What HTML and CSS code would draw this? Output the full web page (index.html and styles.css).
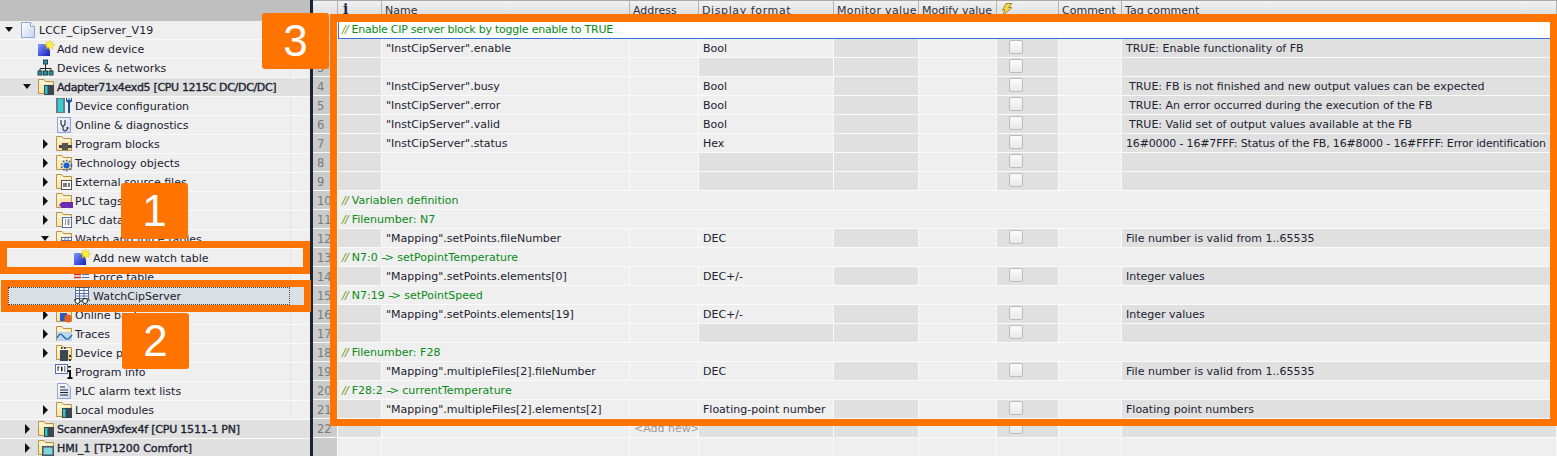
FILE: index.html
```html
<!DOCTYPE html>
<html lang="en">
<head>
<meta charset="utf-8">
<title>Watch table</title>
<link rel="stylesheet" href="styles.css">
</head>
<body>
<svg class="defs" width="0" height="0" aria-hidden="true">
  <defs>
    <linearGradient id="gBlue" x1="0" y1="0" x2="1" y2="1"><stop offset="0" stop-color="#7f96ff"/><stop offset="1" stop-color="#1420b8"/></linearGradient>
    <linearGradient id="gPage" x1="0" y1="0" x2="1" y2="1"><stop offset="0" stop-color="#ffffff"/><stop offset="1" stop-color="#c4d4f2"/></linearGradient>
    <linearGradient id="gFolder" x1="0" y1="0" x2="1" y2="1"><stop offset="0" stop-color="#fff6cf"/><stop offset="1" stop-color="#f5d583"/></linearGradient>
    <symbol id="folder" viewBox="0 0 18 18">
      <path d="M1.500 1.500h5.500l1.500 2h8v12h-15z" fill="url(#gFolder)" stroke="#b7954a"/>
      <path d="M2.500 5.500h13" stroke="#fff" fill="none"/>
    </symbol>
    <symbol id="star" viewBox="0 0 18 18">
      <path d="M12.500 0l1 3 2.600-1.800-1.100 3 3 .8-3 1 1.100 3-2.600-1.800-1 3-1-3-2.600 1.800 1.100-3-3-1 3-.8-1.100-3 2.600 1.800z" fill="#fff23a" stroke="#d9b400" stroke-width=".4"/>
    </symbol>
  </defs>
</svg>
<div class="screen">
  <nav class="tree">
    <div class="tree-top"></div>
    <div class="node"><div class="cell l0"><i class="arrow down"></i><svg class="ico" viewBox="0 0 18 18"><path d="M2.500 1.500h9l4 4v11h-13z" fill="url(#gPage)" stroke="#8ea6d6"/><path d="M11.500 1.500v4h4" fill="#fff" stroke="#8ea6d6"/></svg><span>LCCF_CipServer_V19</span></div></div>
    <div class="node"><div class="cell l1"><svg class="ico" viewBox="0 0 18 18"><rect x="1" y="4" width="12" height="12" fill="url(#gBlue)"/><use href="#star"/></svg><span>Add new device</span></div></div>
    <div class="node"><div class="cell l1"><svg class="ico" viewBox="0 0 18 18"><path d="M8.500 5v4M3 13v-3.500h11V13M8.500 9.500V13" stroke="#222" fill="none"/><rect x="6.500" y="1" width="4" height="4" fill="#2b8fa8" stroke="#244"/><rect x="1" y="12" width="4" height="4" fill="#2b8fa8" stroke="#244"/><rect x="6.500" y="12" width="4" height="4" fill="#2b8fa8" stroke="#244"/><rect x="12" y="12" width="4" height="4" fill="#2b8fa8" stroke="#244"/></svg><span>Devices &amp; networks</span></div></div>
    <div class="node band"><div class="cell l1 bold long"><i class="arrow down"></i><svg class="ico" viewBox="0 0 18 18"><use href="#folder"/><rect x="7" y="7" width="10" height="10" fill="#3a4650"/><rect x="8" y="8" width="2.500" height="8" fill="#2cc3c9"/></svg><span>Adapter71x4exd5 [CPU 1215C DC/DC/DC]</span></div></div>
    <div class="node"><div class="cell l2"><svg class="ico" viewBox="0 0 18 18"><rect x="1" y="1" width="9" height="15" fill="#6e7a84"/><rect x="3" y="2" width="5" height="13" fill="#2fd0d0"/><path d="M11 1v3l2 2v10h2V6l2-2V1l-1 0v2h-1.500V1h-1v2H12V1z" fill="#1a4f9c"/></svg><span>Device configuration</span></div></div>
    <div class="node"><div class="cell l2"><svg class="ico" viewBox="0 0 18 18"><rect x="2.500" y="1.500" width="13" height="15" fill="url(#gPage)" stroke="#8ea6d6"/><path d="M6 4v4a2 2 0 0 0 4 0V4M8 10v3a2 2 0 0 0 4 0" stroke="#111" fill="none"/><circle cx="12.500" cy="12" r="1" fill="#111"/></svg><span>Online &amp; diagnostics</span></div></div>
    <div class="node"><div class="cell l2"><i class="arrow right"></i><svg class="ico" viewBox="0 0 18 18"><use href="#folder"/><rect x="4" y="10" width="3" height="3" fill="#444"/><rect x="7" y="8" width="6" height="7" fill="#555"/><rect x="13" y="10" width="4" height="3" fill="#444"/></svg><span>Program blocks</span></div></div>
    <div class="node"><div class="cell l2"><i class="arrow right"></i><svg class="ico" viewBox="0 0 18 18"><use href="#folder"/><circle cx="11.500" cy="11.500" r="3" fill="#1a5fd0"/><circle cx="11.500" cy="11.500" r="5" fill="none" stroke="#1a5fd0" stroke-width="1.600" stroke-dasharray="1.600 1.600"/></svg><span>Technology objects</span></div></div>
    <div class="node"><div class="cell l2"><i class="arrow right"></i><svg class="ico" viewBox="0 0 18 18"><use href="#folder"/><rect x="6.500" y="7.500" width="10" height="9" fill="#fff" stroke="#555"/><path d="M9 10v4M11 10v4M14 10v4" stroke="#223" stroke-width="1.200"/></svg><span>External source files</span></div></div>
    <div class="node"><div class="cell l2"><i class="arrow right"></i><svg class="ico" viewBox="0 0 18 18"><use href="#folder"/><path d="M4 13l3-3h11v6H7z" fill="#6a2bb5"/></svg><span>PLC tags</span></div></div>
    <div class="node"><div class="cell l2"><i class="arrow right"></i><svg class="ico" viewBox="0 0 18 18"><use href="#folder"/><rect x="7.500" y="6.500" width="9" height="10" fill="#fff" stroke="#5570a8"/><path d="M10 9h1M10 11h1M10 13h1M12.500 9h2M12.500 11h2M12.500 13h2" stroke="#223"/></svg><span>PLC data types</span></div></div>
    <div class="node"><div class="cell l2"><i class="arrow down"></i><svg class="ico" viewBox="0 0 18 18"><use href="#folder"/><rect x="6.500" y="7.500" width="10" height="9" fill="#fff" stroke="#5570a8"/><path d="M7 10.500h9M7 13.500h9M10 8v8M13 8v8" stroke="#5570a8"/></svg><span>Watch and force tables</span></div></div>
    <div class="node"><div class="cell l3"><svg class="ico" viewBox="0 0 18 18"><rect x="1" y="4" width="12" height="12" fill="url(#gBlue)"/><use href="#star"/></svg><span>Add new watch table</span></div></div>
    <div class="node"><div class="cell l3"><svg class="ico" viewBox="0 0 18 18"><path d="M1 6.500h7M1 9.500h7" stroke="#d02a2a" stroke-width="1.500"/><path d="M9 6.500h7M9 9.500h7" stroke="#5570a8"/></svg><span>Force table</span></div></div>
    <div class="node picked"><div class="cell l3 focus"><svg class="ico" viewBox="0 0 18 18"><rect x="2.500" y=".5" width="13" height="11" fill="#fff" stroke="#5570a8"/><path d="M3 3.500h12M3 6.500h12M3 9h12M6.500 1v10M11 1v10" stroke="#5570a8"/><circle cx="4.500" cy="14" r="2.500" fill="#fff" stroke="#222"/><circle cx="12" cy="14" r="2.500" fill="#fff" stroke="#222"/><path d="M7 14h2.500M1 12.500l1.500 1M15 12.500l2 1" stroke="#222"/></svg><span>WatchCipServer</span></div></div>
    <div class="node"><div class="cell l2"><i class="arrow right"></i><svg class="ico" viewBox="0 0 18 18"><use href="#folder"/><rect x="5" y="7" width="7" height="8" fill="#2a58c8"/><ellipse cx="13" cy="12.500" rx="3.500" ry="4" fill="#e8601c"/></svg><span>Online backups</span></div></div>
    <div class="node"><div class="cell l2"><i class="arrow right"></i><svg class="ico" viewBox="0 0 18 18"><use href="#folder"/><rect x="2" y="7" width="15" height="9" fill="#bcd6ee"/><path d="M2 13c3-5 4-5 7-1s5 2 8-2" fill="none" stroke="#1d62b0" stroke-width="1.300"/></svg><span>Traces</span></div></div>
    <div class="node"><div class="cell l2"><i class="arrow right"></i><svg class="ico" viewBox="0 0 18 18"><use href="#folder"/><rect x="5" y="6" width="8" height="11" fill="#3a4650"/><rect x="6" y="3" width="1.500" height="2" fill="#333"/><rect x="9" y="3" width="1.500" height="2" fill="#333"/><rect x="14" y="11" width="2" height="2" fill="#333"/><rect x="14" y="15" width="2" height="2" fill="#333"/></svg><span>Device proxy data</span></div></div>
    <div class="node"><div class="cell l2"><svg class="ico" viewBox="0 0 18 18"><rect x=".5" y="1.500" width="12" height="9" fill="#fff" stroke="#5570a8"/><path d="M3 4v4M2.500 4h2M6 4h1v4h-1M9 4h1.500M9 6h1.500M9 8h1.500" stroke="#223"/><path d="M13 3h3v1.500h-3zM12.500 7h3.500v7h1.500v2h-5v-2h1.500V9h-1.500z" fill="#111"/></svg><span>Program info</span></div></div>
    <div class="node"><div class="cell l2"><svg class="ico" viewBox="0 0 18 18"><path d="M2.500 1.500h9l4 4v11h-13z" fill="url(#gPage)" stroke="#8ea6d6"/><path d="M5 5h5M5 8h8M5 10.500h8M5 13h8" stroke="#222"/></svg><span>PLC alarm text lists</span></div></div>
    <div class="node"><div class="cell l2"><i class="arrow right"></i><svg class="ico" viewBox="0 0 18 18"><use href="#folder"/><rect x="7" y="7" width="10" height="10" fill="#3a4650"/><rect x="8" y="8" width="2.500" height="8" fill="#2cc3c9"/></svg><span>Local modules</span></div></div>
    <div class="node band"><div class="cell l1 bold mid"><i class="arrow right"></i><svg class="ico" viewBox="0 0 18 18"><use href="#folder"/><rect x="7" y="7" width="10" height="10" fill="#3a4650"/><rect x="8" y="8" width="2.500" height="8" fill="#2cc3c9"/></svg><span>ScannerA9xfex4f [CPU 1511-1 PN]</span></div></div>
    <div class="node band"><div class="cell l1 bold"><i class="arrow right"></i><svg class="ico" viewBox="0 0 18 18"><use href="#folder"/><rect x="5" y="7" width="12" height="10" fill="#4a5560"/><rect x="6.500" y="8.500" width="9" height="7" fill="#7fd6dc"/></svg><span>HMI_1 [TP1200 Comfort]</span></div></div>
  </nav>

  <div class="divider"></div>

  <main class="sheet">
    <div class="line head">
      <div class="num"></div>
      <div class="c"><b class="info">i</b></div>
      <div class="c">Name</div>
      <div class="c">Address</div>
      <div class="c">Display format</div>
      <div class="c">Monitor value</div>
      <div class="c">Modify value</div>
      <div class="c"><svg class="bolt" viewBox="0 0 14 14"><path d="M6 .5h6L8.500 4.500H12L2 13.500l3-6.500H2.500z" fill="#f3d64a" stroke="#8a7420" stroke-width=".8"/></svg></div>
      <div class="c">Comment</div>
      <div class="c">Tag comment</div>
    </div>
    <div class="line note active"><div class="num">1</div><div class="txt"><em>//</em> Enable CIP server block by toggle enable to TRUE</div></div>
    <div class="line"><div class="num">2</div><div class="c dim"></div><div class="c">"InstCipServer".enable</div><div class="c"></div><div class="c">Bool</div><div class="c dim"></div><div class="c"></div><div class="c dim"><i class="box"></i></div><div class="c"></div><div class="c dim">TRUE: Enable functionality of FB</div></div>
    <div class="line blank"><div class="num">3</div><div class="c dim"></div><div class="c"></div><div class="c"></div><div class="c dim"></div><div class="c dim"></div><div class="c"></div><div class="c dim"><i class="box"></i></div><div class="c"></div><div class="c dim"></div></div>
    <div class="line"><div class="num">4</div><div class="c dim"></div><div class="c">"InstCipServer".busy</div><div class="c"></div><div class="c">Bool</div><div class="c dim"></div><div class="c"></div><div class="c dim"><i class="box"></i></div><div class="c"></div><div class="c dim sp">TRUE: FB is not finished and new output values can be expected</div></div>
    <div class="line"><div class="num">5</div><div class="c dim"></div><div class="c">"InstCipServer".error</div><div class="c"></div><div class="c">Bool</div><div class="c dim"></div><div class="c"></div><div class="c dim"><i class="box"></i></div><div class="c"></div><div class="c dim sp">TRUE: An error occurred during the execution of the FB</div></div>
    <div class="line"><div class="num">6</div><div class="c dim"></div><div class="c">"InstCipServer".valid</div><div class="c"></div><div class="c">Bool</div><div class="c dim"></div><div class="c"></div><div class="c dim"><i class="box"></i></div><div class="c"></div><div class="c dim sp">TRUE: Valid set of output values available at the FB</div></div>
    <div class="line"><div class="num">7</div><div class="c dim"></div><div class="c">"InstCipServer".status</div><div class="c"></div><div class="c">Hex</div><div class="c dim"></div><div class="c"></div><div class="c dim"><i class="box"></i></div><div class="c"></div><div class="c dim tight">16#0000 - 16#7FFF: Status of the FB, 16#8000 - 16#FFFF: Error identification</div></div>
    <div class="line blank"><div class="num">8</div><div class="c dim"></div><div class="c"></div><div class="c"></div><div class="c dim"></div><div class="c dim"></div><div class="c"></div><div class="c dim"><i class="box"></i></div><div class="c"></div><div class="c dim"></div></div>
    <div class="line blank"><div class="num">9</div><div class="c dim"></div><div class="c"></div><div class="c"></div><div class="c dim"></div><div class="c dim"></div><div class="c"></div><div class="c dim"><i class="box"></i></div><div class="c"></div><div class="c dim"></div></div>
    <div class="line note"><div class="num">10</div><div class="txt"><em>//</em> Variablen definition</div></div>
    <div class="line note"><div class="num">11</div><div class="txt"><em>//</em> Filenumber: N7</div></div>
    <div class="line"><div class="num">12</div><div class="c dim"></div><div class="c">"Mapping".setPoints.fileNumber</div><div class="c"></div><div class="c">DEC</div><div class="c dim"></div><div class="c"></div><div class="c dim"><i class="box"></i></div><div class="c"></div><div class="c dim">File number is valid from 1..65535</div></div>
    <div class="line note"><div class="num">13</div><div class="txt"><em>//</em> N7:0 <span class="arrowtext">--&gt;</span> setPopintTemperature</div></div>
    <div class="line"><div class="num">14</div><div class="c dim"></div><div class="c">"Mapping".setPoints.elements[0]</div><div class="c"></div><div class="c">DEC+/-</div><div class="c dim"></div><div class="c"></div><div class="c dim"><i class="box"></i></div><div class="c"></div><div class="c dim">Integer values</div></div>
    <div class="line note"><div class="num">15</div><div class="txt"><em>//</em> N7:19 <span class="arrowtext">--&gt;</span> setPointSpeed</div></div>
    <div class="line"><div class="num">16</div><div class="c dim"></div><div class="c">"Mapping".setPoints.elements[19]</div><div class="c"></div><div class="c">DEC+/-</div><div class="c dim"></div><div class="c"></div><div class="c dim"><i class="box"></i></div><div class="c"></div><div class="c dim">Integer values</div></div>
    <div class="line blank"><div class="num">17</div><div class="c dim"></div><div class="c"></div><div class="c"></div><div class="c dim"></div><div class="c dim"></div><div class="c"></div><div class="c dim"><i class="box"></i></div><div class="c"></div><div class="c dim"></div></div>
    <div class="line note"><div class="num">18</div><div class="txt"><em>//</em> Filenumber: F28</div></div>
    <div class="line"><div class="num">19</div><div class="c dim"></div><div class="c">"Mapping".multipleFiles[2].fileNumber</div><div class="c"></div><div class="c">DEC</div><div class="c dim"></div><div class="c"></div><div class="c dim"><i class="box"></i></div><div class="c"></div><div class="c dim">File number is valid from 1..65535</div></div>
    <div class="line note"><div class="num">20</div><div class="txt"><em>//</em> F28:2 <span class="arrowtext">--&gt;</span> currentTemperature</div></div>
    <div class="line"><div class="num">21</div><div class="c dim"></div><div class="c">"Mapping".multipleFiles[2].elements[2]</div><div class="c"></div><div class="c">Floating-point number</div><div class="c dim"></div><div class="c"></div><div class="c dim"><i class="box"></i></div><div class="c"></div><div class="c dim">Floating point numbers</div></div>
    <div class="line blank"><div class="num">22</div><div class="c dim"></div><div class="c"></div><div class="c addnew">&lt;Add new&gt;</div><div class="c dim"></div><div class="c dim"></div><div class="c"></div><div class="c dim"><i class="box"></i></div><div class="c"></div><div class="c dim"></div></div>
    <div class="line"><div class="num"></div><div class="c"></div><div class="c"></div><div class="c"></div><div class="c"></div><div class="c"></div><div class="c"></div><div class="c"></div><div class="c"></div><div class="c"></div></div>
  </main>

  <div class="frame f1"></div>
  <div class="frame f2"></div>
  <div class="frame f3"></div>
  <div class="badge b1">1</div>
  <div class="badge b2">2</div>
  <div class="badge b3">3</div>
</div>
</body>
</html>
```
FILE: styles.css
```css
* { box-sizing: border-box; }
html, body { margin: 0; padding: 0; background: #efefef; }
.defs { position: absolute; }
.screen {
  position: relative;
  display: flex;
  width: 1557px;
  height: 456px;
  overflow: hidden;
  font: 11px/20px "DejaVu Sans", Tahoma, sans-serif;
  color: #1c2230;
}

/* project tree */
.tree { width: 310px; flex: none; background: #efefef; }
.tree-top { height: 21px; background: #bfbfbf; }
.node { height: 19px; border-bottom: 1px solid #fafafa; background: #efefef; }
.node.band { background: #e0e0e0; }
.node.picked { background: #d9dfe3; }
.cell {
  position: relative;
  display: flex;
  align-items: center;
  width: 291px;
  height: 18px;
  border-right: 1px solid #e2e2e2;
  white-space: nowrap;
}
.cell span { margin-top: 2px; }
.cell.l0 { padding-left: 19px; }
.cell.l1 { padding-left: 37px; }
.cell.l2 { padding-left: 55px; }
.cell.l3 { padding-left: 73px; }
.cell.bold { -webkit-text-stroke: .35px #1c2230; }
.cell.long { letter-spacing: -.33px; }
.cell.mid { letter-spacing: -.2px; }
.cell.focus { outline: 1px dotted #444; outline-offset: -1px; margin-left: 8px; width: 282px; padding-left: 65px; }
.ico { width: 18px; height: 18px; flex: none; margin-right: 2px; }
.arrow { position: absolute; width: 0; height: 0; border-style: solid; }
.arrow.down { margin-left: -14px; top: 6px; border-width: 5px 4px 0 4px; border-color: #111 transparent transparent transparent; }
.arrow.right { margin-left: -12px; top: 4px; border-width: 5px 0 5px 5px; border-color: transparent transparent transparent #111; }

.divider { width: 3px; flex: none; background: #1b2433; }

/* table */
.sheet { flex: 1; min-width: 0; display: flex; flex-direction: column; }
.line {
  display: grid;
  grid-template-columns: 25px 44px 248px 69px 135px 85px 78px 62px 63px 435px;
  grid-template-rows: 18px;
  height: 19px;
  flex: none;
  border-bottom: 1px solid #fafafa;
  background: #efefef;
  white-space: nowrap;
}
.line.head {
  height: 20px;
  border-top: 1px solid #a9a9a9;
  border-bottom: 1px solid #bdbdbd;
  background: linear-gradient(#f2f2f2, #d9d9d9);
  color: #2d3140;
}
.head .c { padding-left: 3px; border-right: 1px solid #b4b4b4; }
.head .c:nth-child(5) { letter-spacing: .6px; }
.head .c:nth-child(6) { letter-spacing: .35px; }
.head .num { background: linear-gradient(#f2f2f2, #d9d9d9); border-right: 1px solid #b4b4b4; }
.num { padding-left: 4px; background: #cbcbcb; color: #7a7a7a; border-right: 1px solid #fafafa; font-size: 11.5px; }
.c { padding-left: 4px; border-right: 1px solid #fafafa; overflow: hidden; }
.c.dim { background: #e0e0e0; }
.c.sp { padding-left: 7px; }
.c.addnew { color: #9a9a9a; }
.tight { letter-spacing: -.16px; }
.info { display: block; width: 14px; font: 700 14px/16px "DejaVu Serif", serif; color: #1b2a4a; padding-left: 2px; }
.bolt { display: block; width: 14px; height: 14px; margin-top: 2px; }
.box {
  display: block;
  width: 14px;
  height: 14px;
  margin: 1px 0 0 8px;
  border: 1px solid #bcbcbc;
  border-radius: 2px;
  background: linear-gradient(#fbfbfb, #e9e9e9);
}
.note .txt { grid-column: 2 / -1; padding-left: 4px; color: #0a8a16; }
.note .txt em { font-style: italic; color: #6a9a12; letter-spacing: -.6px; }
.arrowtext { letter-spacing: -2.200px; margin-right: 2px; }
.note.active .txt { background: #fff; border: 1px solid #3a6fd6; margin-top: 1px; height: 18px; line-height: 16px; padding-left: 3px; letter-spacing: -.24px; }

/* annotation overlays */
.frame { position: absolute; border: 7px solid #ff7300; }
.f1 { left: 0; top: 241px; width: 310px; height: 33px; }
.f2 { left: 1px; top: 280px; width: 310px; height: 32px; }
.f3 { left: 330px; top: 14px; width: 1227px; height: 412px; border-top-width: 8px; }
.badge {
  position: absolute;
  width: 67px;
  height: 56px;
  border-radius: 3px;
  background: #ff7300;
  color: #fff;
  font: 44px/56px "Liberation Sans", Arial, sans-serif;
  text-align: center;
}
.b1 { left: 121px; top: 183px; }
.b2 { left: 122px; top: 313px; }
.b3 { left: 262px; top: 13px; }
```
